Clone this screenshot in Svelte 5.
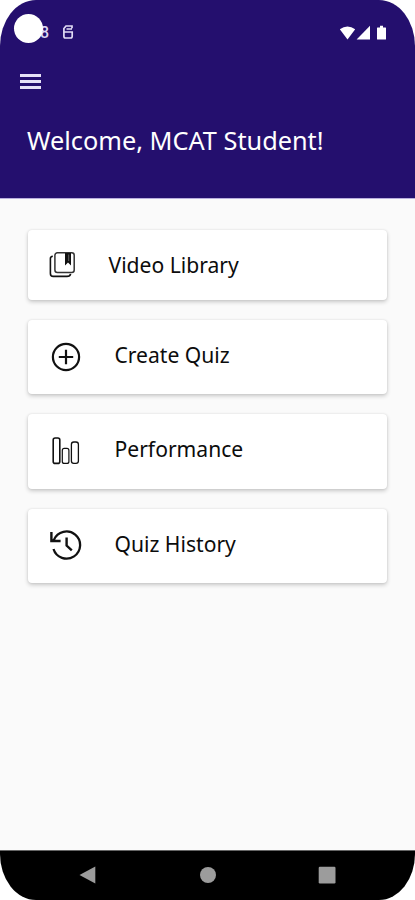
<script>
  const items = [
    { icon: "library", label: "Video Library", first: true },
    { icon: "add", label: "Create Quiz" },
    { icon: "chart", label: "Performance" },
    { icon: "history", label: "Quiz History" },
  ];
</script>

<div class="phone">
  <header>
    <div class="status">
      <span class="camera"></span>
      <span class="clock">8</span>
      <svg class="notice" width="12" height="16" viewBox="0 0 12 16">
        <path d="M10 4.2V2H4L1.9 4.5V12.3Q1.9 14 3.5 14H8.5Q10.2 14 10.2 12.3V8H2M4.5 5H10" />
      </svg>
      <svg class="signals" width="50" height="16" viewBox="0 0 50 16">
        <path d="M0.8 4.2Q8.5-1.4 16.2 4.2L8.5 14.5Z" />
        <path d="M31 .8V14.5H17.6Z" />
        <path d="M38.5 2.5H41V.7H44V2.5H46.6Q47 2.5 47 3V14Q47 14.5 46.6 14.5H38.5Q38 14.5 38 14V3Q38 2.5 38.5 2.5Z" />
      </svg>
    </div>
    <button class="menu" aria-label="Menu"><i></i><i></i><i></i></button>
    <h1>Welcome, MCAT Student!</h1>
  </header>

  <main>
    {#each items as item}
      <button class="card" class:first={item.first}>
        <span class="icon">
          {#if item.icon === "library"}
            <svg width="28" height="28" viewBox="0 0 28 28">
              <rect class="cover" x="6.9" y="1.8" width="19.3" height="19.6" rx="2.5" />
              <path d="M4.8 5.2C3.2 5.3 2.4 6.1 2.4 7.6V22.4Q2.4 25.4 5.2 25.4H19C21.2 25.4 22.3 24.4 22.6 22.8" stroke-width="1.6" />
              <path class="solid" d="M17 2H23V14.5L20 11.5L17 14.5Z" />
              <path class="shine" d="M20.7 3.5V10" />
            </svg>
          {:else if item.icon === "add"}
            <svg width="30" height="30" viewBox="0 0 30 30">
              <circle cx="15" cy="15" r="13.1" stroke-width="2.2" />
              <path d="M15 7.8V22.2M7.8 15H22.2" stroke-width="2.2" />
            </svg>
          {:else if item.icon === "chart"}
            <svg width="30" height="30" viewBox="0 0 30 30">
              <rect x="2.2" y="2" width="6.6" height="25.4" rx="2" stroke-width="1.6" />
              <rect x="11.3" y="12.4" width="6.6" height="15" rx="2" stroke-width="1.2" />
              <rect x="20.4" y="6" width="7" height="21.4" rx="2.4" stroke-width="1.3" />
            </svg>
          {:else}
            <svg width="34" height="32" viewBox="0 0 34 32">
              <path d="M4.5 20A13.6 13.6 0 1 0 5 10.7L2.9 12" stroke-width="2.3" />
              <path d="M2.4 3V12H11.6" stroke-width="2.4" />
              <path d="M17.6 8.5V16.5L22.8 21.4" stroke-width="2.4" />
            </svg>
          {/if}
        </span>
        <span class="label">{item.label}</span>
      </button>
    {/each}
  </main>

  <footer>
    <svg width="18" height="18" viewBox="0 0 18 18"><path d="M.5 9L16.3 .5V17.5Z" /></svg>
    <svg width="18" height="18" viewBox="0 0 18 18"><circle cx="9" cy="9" r="8" /></svg>
    <svg width="18" height="18" viewBox="0 0 18 18"><rect x=".7" y=".7" width="16.8" height="16.8" rx="1.2" /></svg>
  </footer>
</div>

<style>
  :global(body) {
    margin: 0;
    background: #fff;
  }
  .phone {
    display: flex;
    flex-direction: column;
    box-sizing: border-box;
    width: 415px;
    height: 900px;
    overflow: hidden;
    border-radius: 36px / 46px;
    background: #fafafa;
    font-family: "Noto Sans", "Open Sans", sans-serif;
  }
  header {
    height: 198px;
    flex: none;
    background: #240f6e;
    border-bottom: 1px solid #b9aede;
    color: #fff;
  }
  .status {
    display: flex;
    align-items: flex-start;
    height: 60px;
    padding: 0 26px 0 14px;
  }
  .camera {
    width: 29px;
    height: 29px;
    margin-top: 14px;
    border-radius: 50%;
    background: #fff;
    z-index: 1;
  }
  .clock {
    margin: 24px 0 0 -3px;
    font: 500 16px/18px Roboto, sans-serif;
    color: #dcd6f2;
  }
  .notice {
    margin: 24px 0 0 13px;
    fill: none;
    stroke: #e1dcf5;
    stroke-width: 1.7;
  }
  .signals {
    margin: 25px 0 0 auto;
    fill: #fff;
  }
  button {
    border: 0;
    font: inherit;
    text-align: left;
    cursor: pointer;
  }
  .menu {
    display: flex;
    flex-direction: column;
    gap: 3px;
    margin: 14px 0 0 20px;
    padding: 0;
    background: none;
  }
  .menu i {
    width: 21px;
    height: 3px;
    background: #e6e1f7;
  }
  h1 {
    margin: 33px 0 0 27px;
    font-size: 25.3px;
    font-weight: 400;
    line-height: 36px;
    white-space: nowrap;
  }
  main {
    display: flex;
    flex: 1;
    flex-direction: column;
    gap: 20px;
    padding: 31px 28px 0;
  }
  .card {
    display: flex;
    align-items: center;
    box-sizing: border-box;
    height: 74.3px;
    padding: 0 0 1px 22px;
    border-radius: 4px;
    background: #fff;
    box-shadow: 0 2px 4px rgba(0, 0, 0, 0.2), 0 0 2px rgba(0, 0, 0, 0.1);
    color: #0c0c0c;
  }
  .card.first {
    height: 70px;
    padding: 0 0 0 20px;
  }
  .icon {
    display: flex;
    justify-content: center;
    width: 32px;
    margin-right: 32.5px;
  }
  .first .icon {
    width: 28px;
  }
  .icon svg {
    flex: none;
    fill: none;
    stroke: #111;
  }
  .icon .cover {
    stroke: #333;
    stroke-width: 1.5;
  }
  .icon .solid {
    fill: #111;
    stroke: none;
  }
  .icon .shine {
    stroke: #777;
    stroke-width: 0.8;
  }
  .label {
    padding-bottom: 3px;
    font-size: 21.1px;
    line-height: 30px;
    white-space: nowrap;
  }
  .first .label {
    padding-bottom: 0;
  }
  footer {
    display: flex;
    justify-content: space-between;
    align-items: center;
    box-sizing: border-box;
    flex: none;
    height: 50px;
    padding: 0 79px 1px;
    border-top: 1px solid #666;
    background: #000;
  }
  footer svg {
    fill: #9c9c9c;
  }
</style>
